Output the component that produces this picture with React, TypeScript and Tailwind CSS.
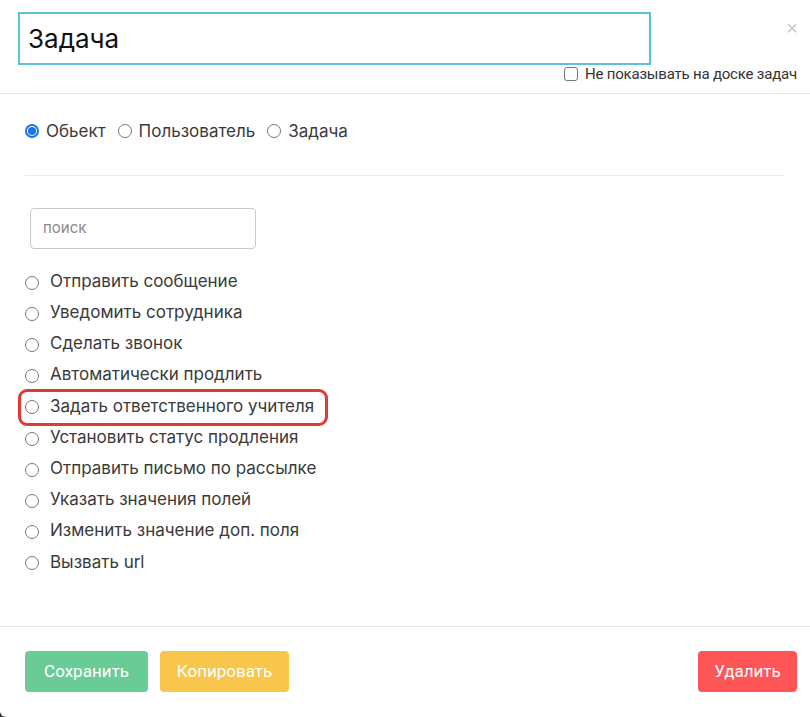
import { useState } from "react";

const ACTIONS = [
  "Отправить сообщение",
  "Уведомить сотрудника",
  "Сделать звонок",
  "Автоматически продлить",
  "Задать ответственного учителя",
  "Установить статус продления",
  "Отправить письмо по рассылке",
  "Указать значения полей",
  "Изменить значение доп. поля",
  "Вызвать url",
];

const HIGHLIGHT = 4;

function Radio({ checked }: { checked?: boolean }) {
  return (
    <span
      className={
        checked
          ? "inline-flex h-[14px] w-[14px] shrink-0 items-center justify-center rounded-full border-2 border-[#1a73e8] bg-white"
          : "inline-block h-[14px] w-[14px] shrink-0 rounded-full border border-[#767676] bg-white"
      }
    >
      {checked && <span className="h-[8px] w-[8px] rounded-full bg-[#1a73e8]" />}
    </span>
  );
}

export default function App() {
  const [target, setTarget] = useState("object");

  return (
    <div className="h-[717px] w-[810px] bg-[#333]">
      <div className="flex h-full flex-col rounded-bl-[6px] bg-white font-['Inter',sans-serif] text-[#3a3a3a]">
        {/* header: title input + hide flag */}
        <div className="relative border-b border-[#e5e5e5] px-[18px] pt-[12px] pb-[11px]">
          <div className="flex h-[53px] w-[633px] items-center border-2 border-[#5bbfdd] px-[8px] text-[26px] text-[#111]">
            Задача
          </div>
          <span className="absolute right-[12px] top-[18px] font-['Liberation_Sans',sans-serif] text-[20px] leading-none text-[#c8c8c8]">
            ×
          </span>
          <label className="-mr-[5px] mt-[1px] flex items-center justify-end gap-[7px] font-['Roboto',sans-serif] text-[15px] leading-[16px] tracking-[-0.2px] text-[#333]">
            <span className="h-[14px] w-[14px] rounded-[3px] border border-[#767676]" />
            Не показывать на доске задач
          </label>
        </div>

        {/* body */}
        <div className="flex-1 px-[25px] pt-[27px]">
          <div className="flex items-center gap-[12px] text-[17px] leading-[20px]">
            {[
              ["object", "Обьект"],
              ["user", "Пользователь"],
              ["task", "Задача"],
            ].map(([key, label]) => (
              <button
                key={key}
                onClick={() => setTarget(key)}
                className="flex items-center gap-[7px]"
              >
                <Radio checked={target === key} />
                <span>{label}</span>
              </button>
            ))}
          </div>

          <hr className="mt-[34px] border-[#ebebeb]" />

          <div className="mt-[32px] ml-[5px] flex h-[41px] w-[226px] items-center rounded-[4px] border border-[#c8c8c8] px-[12px] text-[15px] text-[#8a8a8a]">
            поиск
          </div>

          <ul className="mt-[18px] flex flex-col">
            {ACTIONS.map((a, i) => (
              <li
                key={a}
                className={
                  i === HIGHLIGHT
                    ? "-mx-[4px] flex h-[31.2px] w-fit items-center gap-[11px] rounded-[6px] pr-[11px] pl-[4px] text-[17px] outline-[3px] -outline-offset-[0.5px] outline-[#e03a2f] [outline-style:solid]"
                    : "flex h-[31.2px] items-center gap-[11px] text-[17px]"
                }
              >
                <Radio />
                <span className="-mt-[2px]">{a}</span>
              </li>
            ))}
          </ul>
        </div>

        {/* footer */}
        <div className="flex items-center gap-[12px] border-t border-[#e5e5e5] px-[25px] pt-[24px] pb-[25px] font-['Roboto',sans-serif] text-[17px] text-white">
          <button className="h-[41px] w-[123px] rounded-[4px] bg-[#6bcb97]">Сохранить</button>
          <button className="h-[41px] w-[129px] rounded-[4px] bg-[#f7c64a]">Копировать</button>
          <button className="ml-auto mr-[-12px] h-[41px] w-[99px] rounded-[4px] bg-[#fe5656]">
            Удалить
          </button>
        </div>
      </div>
    </div>
  );
}
